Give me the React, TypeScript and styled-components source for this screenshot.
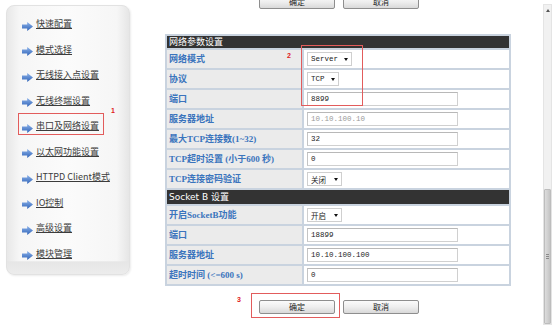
import styled, { createGlobalStyle } from 'styled-components';

const GlobalStyle = createGlobalStyle`
  html, body {
    margin: 0;
    padding: 0;
    background: #ffffff;
  }
  body {
    font-family: "Noto Sans CJK SC", "Liberation Sans", sans-serif;
  }
`;

const Page = styled.div`
  position: relative;
  width: 553px;
  height: 327px;
  overflow: hidden;
  display: flex;
  align-items: flex-start;
  background: #fff;
`;

const SidePanel = styled.div`
  margin: 5px 0 0 6px;
  width: 124px;
  height: 270px;
  box-sizing: border-box;
  padding: 5px 0 0 0;
  border-radius: 8px;
  border: 1px solid #e2e2e2;
  background:
    linear-gradient(to bottom, rgba(255,255,255,0) 95%, #e6e6e6 95.5%, #ececec 100%),
    linear-gradient(to right, #e8e8e8 0%, #f6f6f6 10%, #fbfbfb 50%, #f6f6f6 90%, #e6e6e6 100%);
  box-shadow: 1px 1px 2px rgba(0, 0, 0, 0.08);
`;

const MenuItem = styled.a`
  display: flex;
  align-items: center;
  height: 25.5px;
  padding-left: 15px;
  gap: 3px;
  color: #3c3c3c;
  font-size: 9px;
  text-decoration: none;
  span {
    text-decoration: underline;
    text-underline-offset: 1px;
    line-height: 1;
  }
`;

const Arrow = styled.svg`
  width: 11px;
  height: 9px;
  margin-top: 5px;
  flex: none;
`;

const Main = styled.div`
  margin-left: 35px;
  width: 346px;
  display: flex;
  flex-direction: column;
`;

const ButtonRow = styled.div<{ $top: number }>`
  display: flex;
  gap: 8px;
  padding-left: 94px;
  margin-top: ${(p) => p.$top}px;
`;

const Button = styled.button`
  width: 76px;
  height: 14px;
  padding: 0;
  border: 1px solid #8e8e8e;
  border-radius: 2px;
  background: linear-gradient(to bottom, #fbfbfb 0%, #eeeeee 50%, #d9d9d9 100%);
  font-family: "Noto Sans CJK SC", sans-serif;
  font-size: 8px;
  line-height: 12px;
  color: #222;
`;

const Table = styled.table`
  margin-top: 25px;
  width: 346px;
  border-collapse: separate;
  border-spacing: 2px;
  background: #c9d3df;
  table-layout: fixed;
`;

const LabelCol = styled.col`
  width: 135px;
`;

const HeadCell = styled.td<{ $h: number }>`
  background: #333333;
  color: #ffffff;
  height: ${(p) => p.$h}px;
  padding: 0 0 0 2px;
  font-size: 9px;
  line-height: 1;
  font-family: "DejaVu Sans", "Noto Sans CJK SC", sans-serif;
`;

const LabelCell = styled.td`
  height: 18px;
  padding: 0 0 0 2px;
  background: #ebebeb;
  color: #3a74bd;
  font-size: 9px;
  font-weight: bold;
  line-height: 1;
  white-space: nowrap;
  overflow: hidden;
  font-family: "Liberation Serif", "Noto Sans CJK SC", serif;
`;

const ValueCell = styled.td`
  height: 18px;
  padding: 0 0 0 3px;
  background: #ffffff;
`;

const Field = styled.div<{ $disabled?: boolean }>`
  width: 151px;
  height: 14px;
  box-sizing: border-box;
  border: 1px solid #d0d0d0;
  border-top-color: #b8b8b8;
  border-left-color: #c4c4c4;
  padding-left: 3px;
  display: flex;
  align-items: center;
  font-family: "Liberation Mono", monospace;
  font-size: 7.5px;
  color: ${(p) => (p.$disabled ? '#9a9a9a' : '#222')};
  background: #fff;
`;

const Select = styled.div<{ $w: number }>`
  width: ${(p) => p.$w}px;
  height: 14px;
  box-sizing: border-box;
  border: 1px solid #cfcfcf;
  padding: 0 3px;
  display: flex;
  align-items: center;
  justify-content: space-between;
  font-family: "Liberation Mono", "Noto Sans CJK SC", monospace;
  font-size: 7.5px;
  color: #222;
  background: #fff;
  &::after {
    content: '';
    border-left: 2.5px solid transparent;
    border-right: 2.5px solid transparent;
    border-top: 3px solid #111;
    margin-left: 4px;
  }
`;

const Scrollbar = styled.div`
  margin: 4px 0 0 32px;
  width: 9px;
  height: 321px;
  box-sizing: border-box;
  border: 1px solid #e4e4e4;
  background: #f1f1f1;
  display: flex;
  flex-direction: column;
  justify-content: space-between;
`;

const ScrollArrow = styled.div`
  margin: 4px auto 0;
  width: 0;
  height: 0;
  border-left: 2px solid transparent;
  border-right: 2px solid transparent;
  border-bottom: 3px solid #555;
`;

const Thumb = styled.div`
  height: 135px;
  box-sizing: border-box;
  border: 1px solid #bdbdbd;
  border-radius: 1px;
  background: linear-gradient(to right, #dcdcdc, #cfcfcf 60%, #c4c4c4);
  display: flex;
  align-items: center;
  justify-content: center;
  span {
    width: 3px;
    height: 5px;
    background: repeating-linear-gradient(to bottom, #8a8a8a 0 1px, transparent 1px 2px);
  }
`;

const Mark = styled.div`
  position: absolute;
  border: 1px solid #e25c5c;
  pointer-events: none;
`;

const MarkNum = styled.div`
  position: absolute;
  color: #e02020;
  font-family: "Liberation Sans", sans-serif;
  font-weight: bold;
  font-size: 7px;
  line-height: 1;
`;

const menu = [
  '快速配置',
  '模式选择',
  '无线接入点设置',
  '无线终端设置',
  '串口及网络设置',
  '以太网功能设置',
  'HTTPD Client模式',
  'IO控制',
  '高级设置',
  '模块管理',
];

type Row = { label: string; kind: 'select' | 'input' | 'disabled'; value: string; w?: number };

const netRows: Row[] = [
  { label: '网络模式', kind: 'select', value: 'Server', w: 45 },
  { label: '协议', kind: 'select', value: 'TCP', w: 32 },
  { label: '端口', kind: 'input', value: '8899' },
  { label: '服务器地址', kind: 'disabled', value: '10.10.100.10' },
  { label: '最大TCP连接数(1~32)', kind: 'input', value: '32' },
  { label: 'TCP超时设置 (小于600 秒)', kind: 'input', value: '0' },
  { label: 'TCP连接密码验证', kind: 'select', value: '关闭', w: 35 },
];

const socketRows: Row[] = [
  { label: '开启SocketB功能', kind: 'select', value: '开启', w: 35 },
  { label: '端口', kind: 'input', value: '18899' },
  { label: '服务器地址', kind: 'input', value: '10.10.100.100' },
  { label: '超时时间 (<=600 s)', kind: 'input', value: '0' },
];

const ArrowIcon = () => (
  <Arrow viewBox="0 0 11 9">
    <defs>
      <linearGradient id="ag" x1="0" y1="0" x2="0" y2="1">
        <stop offset="0" stopColor="#8db3ea" />
        <stop offset="1" stopColor="#2f63b8" />
      </linearGradient>
    </defs>
    <path d="M0 2.6 H5.2 V0 L11 4.5 L5.2 9 V6.4 H0 Z" fill="url(#ag)" />
  </Arrow>
);

const renderRow = (r: Row, i: number) => (
  <tr key={i}>
    <LabelCell>{r.label}</LabelCell>
    <ValueCell>
      {r.kind === 'select' ? (
        <Select $w={r.w ?? 40}>{r.value}</Select>
      ) : (
        <Field $disabled={r.kind === 'disabled'}>{r.value}</Field>
      )}
    </ValueCell>
  </tr>
);

export default function App() {
  return (
    <>
      <GlobalStyle />
      <Page>
        <SidePanel>
          {menu.map((m) => (
            <MenuItem key={m} href="#">
              <ArrowIcon />
              <span>{m}</span>
            </MenuItem>
          ))}
        </SidePanel>

        <Main>
          <ButtonRow $top={-5}>
            <Button>确定</Button>
            <Button>取消</Button>
          </ButtonRow>
          <Table>
            <colgroup>
              <LabelCol />
              <col />
            </colgroup>
            <tbody>
              <tr>
                <HeadCell colSpan={2} $h={12}>网络参数设置</HeadCell>
              </tr>
              {netRows.map(renderRow)}
              <tr>
                <HeadCell colSpan={2} $h={14}>Socket B 设置</HeadCell>
              </tr>
              {socketRows.map(renderRow)}
            </tbody>
          </Table>
          <ButtonRow $top={14}>
            <Button>确定</Button>
            <Button>取消</Button>
          </ButtonRow>
        </Main>

        <Scrollbar>
          <ScrollArrow />
          <Thumb>
            <span />
          </Thumb>
        </Scrollbar>

        <Mark style={{ left: 18, top: 113, width: 84, height: 20 }} />
        <MarkNum style={{ left: 111, top: 107 }}>1</MarkNum>
        <Mark style={{ left: 301, top: 45, width: 60, height: 59 }} />
        <MarkNum style={{ left: 287, top: 52 }}>2</MarkNum>
        <Mark style={{ left: 251, top: 293, width: 87, height: 23 }} />
        <MarkNum style={{ left: 237, top: 296 }}>3</MarkNum>
      </Page>
    </>
  );
}
